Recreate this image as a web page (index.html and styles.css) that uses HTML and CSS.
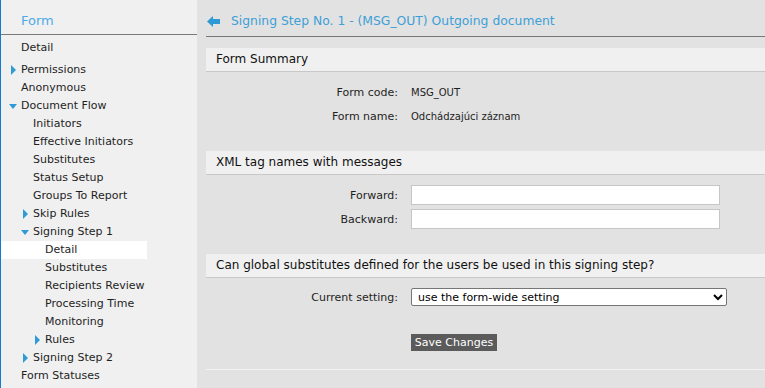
FILE: index.html
```html
<!DOCTYPE html>
<html>
<head>
    <title>Signing Step No. 1</title>
    <link rel="stylesheet" href="styles.css">
</head>
<body>
    <div class="sidebar">
        <div class="sidebar-title">Form</div>
        <ul class="nav">
            <li class="lvl0 first">Detail</li>
            <li class="lvl0 closed">Permissions</li>
            <li class="lvl0">Anonymous</li>
            <li class="lvl0 open">Document Flow</li>
            <li class="lvl1">Initiators</li>
            <li class="lvl1">Effective Initiators</li>
            <li class="lvl1">Substitutes</li>
            <li class="lvl1">Status Setup</li>
            <li class="lvl1">Groups To Report</li>
            <li class="lvl1 closed">Skip Rules</li>
            <li class="lvl1 open">Signing Step 1</li>
            <li class="lvl2 active">Detail</li>
            <li class="lvl2">Substitutes</li>
            <li class="lvl2">Recipients Review</li>
            <li class="lvl2">Processing Time</li>
            <li class="lvl2">Monitoring</li>
            <li class="lvl2 closed">Rules</li>
            <li class="lvl1 closed">Signing Step 2</li>
            <li class="lvl0">Form Statuses</li>
        </ul>
    </div>

    <div class="main">
        <div class="page-title">
            <svg class="back" width="13" height="11" viewBox="0 0 13 11">
                <path d="M0 5.5 L6 0 L6 3 L13 3 L13 8 L6 8 L6 11 Z" fill="#2f9bd6"/>
            </svg>
            <span>Signing Step No. 1 - (MSG_OUT) Outgoing document</span>
        </div>

        <div class="section-head">Form Summary</div>
        <div class="rows info">
            <div class="label">Form code:</div>
            <div class="value">MSG_OUT</div>
            <div class="label">Form name:</div>
            <div class="value">Odchádzajúci záznam</div>
        </div>

        <div class="section-head">XML tag names with messages</div>
        <div class="rows fields">
            <label class="label" for="forward">Forward:</label>
            <input type="text" id="forward">
            <label class="label" for="backward">Backward:</label>
            <input type="text" id="backward">
        </div>

        <div class="section-head">Can global substitutes defined for the users be used in this signing step?</div>
        <div class="rows setting">
            <label class="label" for="setting">Current setting:</label>
            <select id="setting">
                <option>use the form-wide setting</option>
                <option>yes</option>
                <option>no</option>
            </select>
        </div>

        <div class="actions">
            <button>Save Changes</button>
        </div>
    </div>
</body>
</html>
```

FILE: styles.css
```css
body {
    margin: 0;
    font-family: "DejaVu Sans", Verdana, sans-serif;
    font-size: 11px;
    color: #1e1e1e;
    display: flex;
    height: 388px;
    overflow: hidden;
    background-color: #e2e2e2;
}
.sidebar {
    width: 196px;
    border-left: 1px solid #1479d0;
    background-color: #f0f0f0;
    flex-shrink: 0;
}
.sidebar-title {
    height: 35px;
    line-height: 41px;
    padding-left: 20px;
    font-size: 13px;
    color: #4fa9e6;
    border-bottom: 1px solid #7a7a7a;
    box-sizing: border-box;
}
.nav {
    list-style: none;
    margin: 0;
    padding: 4px 0 0 0;
    width: 146px;
}
.nav li {
    height: 18px;
    line-height: 18px;
    position: relative;
    white-space: nowrap;
}
.nav li.first {
    margin-bottom: 4px;
}
.lvl0 { padding-left: 20px; }
.lvl1 { padding-left: 32px; }
.lvl2 { padding-left: 44px; }
.nav li.active {
    background-color: white;
}
.nav li.closed::before,
.nav li.open::before {
    content: "";
    position: absolute;
    width: 0;
    height: 0;
}
.nav li.closed::before {
    top: 4px;
    border-left: 5px solid #2f9bd6;
    border-top: 5px solid transparent;
    border-bottom: 5px solid transparent;
}
.nav li.open::before {
    top: 7px;
    border-top: 5px solid #2f9bd6;
    border-left: 4px solid transparent;
    border-right: 4px solid transparent;
}
.lvl0.closed::before { left: 10px; }
.lvl0.open::before { left: 8px; }
.lvl1.closed::before { left: 22px; }
.lvl1.open::before { left: 20px; }
.lvl2.closed::before { left: 34px; }

.main {
    flex: 1;
    padding-left: 9px;
}
.page-title {
    height: 37px;
    border-bottom: 1px solid #777;
    display: flex;
    align-items: center;
    padding-top: 6px;
    margin-bottom: 11px;
    box-sizing: border-box;
    font-size: 12.35px;
    color: #3d9fd8;
}
.back {
    margin: 0 11px 0 1px;
}
.section-head {
    height: 23px;
    line-height: 23px;
    padding-left: 10px;
    background-color: #f0f0f0;
    border-bottom: 1px solid #c8c8c8;
    font-size: 12px;
    color: #111;
}
.rows {
    display: grid;
    grid-template-columns: 192px auto;
    column-gap: 13px;
    align-items: center;
}
.label {
    text-align: right;
}
.info {
    padding-top: 8px;
    grid-auto-rows: 24px;
    margin-bottom: 23px;
}
.info .value {
    font-size: 10px;
}
.fields {
    padding-top: 10px;
    row-gap: 4px;
    grid-template-columns: 192px 309px;
    margin-bottom: 25px;
}
.fields input {
    height: 20px;
    border: 1px solid #c6c6c6;
    box-sizing: border-box;
    padding: 0 4px;
    background-color: white;
}
.setting {
    padding-top: 10px;
    grid-template-columns: 192px 316px;
}
.setting select {
    height: 18px;
    font-family: "DejaVu Sans", Verdana, sans-serif;
    font-size: 11px;
    border: 1px solid #767676;
    border-radius: 2px;
    background-color: white;
    padding: 0 0 0 2px;
}
.actions {
    margin-top: 28px;
    padding-left: 205px;
    padding-bottom: 18px;
    border-bottom: 1px solid #f2f2f2;
}
.actions button {
    display: block;
    height: 17px;
    width: 86px;
    padding: 0;
    border: none;
    background-color: #5b5b5b;
    color: white;
    font-family: "DejaVu Sans", Verdana, sans-serif;
    font-size: 11px;
    cursor: pointer;
}
```
